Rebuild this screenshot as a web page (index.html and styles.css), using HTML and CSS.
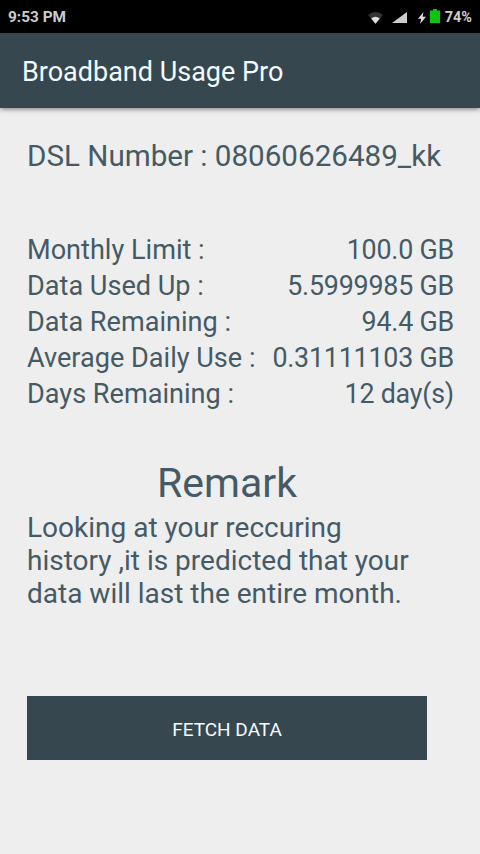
FILE: index.html
```html
<!DOCTYPE html>
<html lang="en">
<head>
    <meta charset="UTF-8">
    <meta name="viewport" content="width=device-width, initial-scale=1.0">
    <title>Broadband Usage Pro</title>
    <link rel="stylesheet" href="styles.css">
</head>
<body>

    <div class="statusbar">
        <span class="hora">9:53 PM</span>
        <div class="icons">
            <svg class="wifi" width="15" height="12" viewBox="0 0 15 12">
                <path d="M0 3Q7.5-3 15 3L7.5 12Z" fill="#333"/>
                <path d="M3.2 6.4Q7.5 3.2 11.8 6.4L7.5 11.8Z" fill="#e0e0e0"/>
            </svg>
            <svg class="signal" width="15" height="11" viewBox="0 0 15 11">
                <path d="M15 0V11H0Z" fill="#ccc"/>
            </svg>
            <svg class="bolt" width="8" height="12" viewBox="0 0 8 12">
                <path d="M5.5 0L0 6.8H3.2L2 12L8 4.8H4.6Z" fill="#ddd"/>
            </svg>
            <svg class="battery" width="10" height="14" viewBox="0 0 10 14">
                <path d="M3 0H7V1.5H10V14H0V1.5H3Z" fill="#0fc50f"/>
            </svg>
            <span class="porcentaje">74%</span>
        </div>
    </div>

    <h1 class="titulo">Broadband Usage Pro</h1>

    <div class="content">
        <p class="dsl">DSL Number : 08060626489_kk</p>

        <div class="usage">
            <div class="row"><span>Monthly Limit :</span><span class="valor">100.0 GB</span></div>
            <div class="row"><span>Data Used Up :</span><span class="valor">5.5999985 GB</span></div>
            <div class="row"><span>Data Remaining :</span><span class="valor">94.4 GB</span></div>
            <div class="row"><span>Average Daily Use :</span><span class="valor">0.31111103 GB</span></div>
            <div class="row"><span>Days Remaining :</span><span class="valor">12 day(s)</span></div>
        </div>

        <h2 class="remark">Remark</h2>
        <p class="mensaje">Looking at your reccuring<br>history ,it is predicted that your<br>data will last the entire month.</p>

        <button class="fetch">FETCH DATA</button>
    </div>

</body>
</html>
```

FILE: styles.css
```css
* {
    box-sizing: border-box;
}
body {
    margin: 0;
    height: 854px;
    overflow: hidden;
    background-color: #eee;
    color: #455a64;
    font-family: Roboto, sans-serif;
}
.statusbar {
    display: flex;
    justify-content: space-between;
    align-items: center;
    height: 33px;
    padding: 1px 8px 0;
    background-color: #000;
    color: #ccc;
    font-size: 15.4px;
    font-weight: 700;
}
.icons {
    display: flex;
    align-items: center;
}
.signal {
    margin-left: 9px;
}
.bolt {
    margin-left: 11px;
}
.battery {
    margin: 0 5px 2px 4px;
}
.wifi,
.signal,
.bolt {
    margin-top: 1px;
}
.porcentaje {
    font-size: 14.4px;
}
.titulo {
    height: 75px;
    margin: 0;
    padding-left: 22px;
    background-color: #37474f;
    box-shadow: 0 1px 5px rgba(0, 0, 0, 0.5);
    color: #f3fbff;
    font-size: 27px;
    font-weight: 400;
    line-height: 79px;
}
.content {
    padding: 30px 26px 0 27px;
}
.dsl {
    margin: 0;
    font-size: 29.6px;
    line-height: 36px;
    white-space: nowrap;
}
.usage {
    margin-top: 58px;
    font-size: 27.1px;
    line-height: 36px;
    white-space: nowrap;
}
.row {
    display: flex;
    justify-content: space-between;
}
.valor {
    font-size: 26.8px;
    letter-spacing: -0.2px;
}
.remark {
    width: 400px;
    margin: 47px 0 0;
    font-size: 41px;
    font-weight: 400;
    line-height: 48px;
    text-align: center;
}
.mensaje {
    margin: 4px 0 0;
    font-size: 28px;
    line-height: 33px;
    white-space: nowrap;
}
.fetch {
    display: block;
    width: 400px;
    height: 64px;
    margin-top: 86px;
    padding: 2px 0 0;
    border: 0;
    background-color: #37474f;
    color: #f3fbff;
    font-family: inherit;
    font-size: 19px;
}
```
